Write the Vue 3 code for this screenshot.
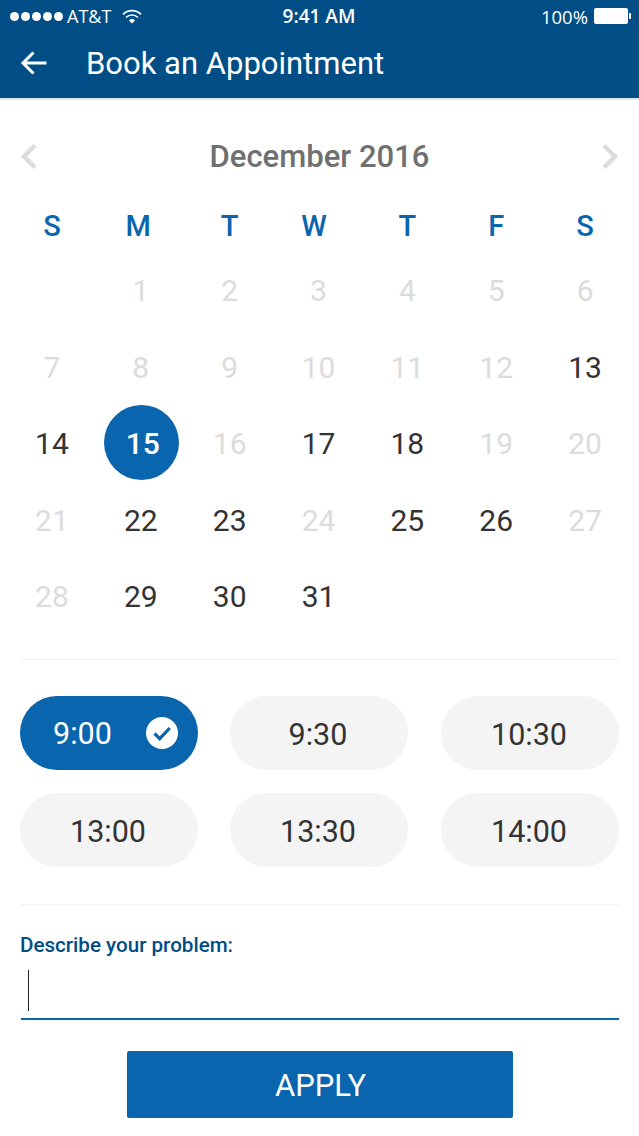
<script setup>
const weekdays = ['S', 'M', 'T', 'W', 'T', 'F', 'S']

const active = [13, 14, 15, 17, 18, 22, 23, 25, 26, 29, 30, 31]
const days = ['', ...Array.from({ length: 31 }, (_, i) => i + 1)].map((n) => ({
  n,
  on: active.includes(n),
  selected: n === 15,
}))
// december 2016 starts on a thursday in real life, the design leaves one blank
const times = ['9:00', '9:30', '10:30', '13:00', '13:30', '14:00']
</script>

<template>
  <div class="page">
    <header class="topbar">
      <div class="status">
        <div class="status-left">
          <span class="dots"><i v-for="d in 5" :key="d"></i></span>
          <span class="carrier">AT&amp;T</span>
          <svg class="wifi" width="20" height="15" viewBox="0 0 20 15">
            <path d="M1 5.4a12.8 12.8 0 0 1 18 0" fill="none" stroke="#fff" stroke-width="1.7" />
            <path d="M4 8.5a8.5 8.5 0 0 1 12 0" fill="none" stroke="#fff" stroke-width="1.7" />
            <path d="M6.9 11.4a4.4 4.4 0 0 1 6.2 0L10 14.4z" fill="#fff" />
          </svg>
        </div>
        <div class="clock">9:41 AM</div>
        <div class="status-right">
          <span>100%</span>
          <span class="battery"><i></i></span>
        </div>
      </div>
      <div class="nav">
        <svg class="back" width="28" height="26" viewBox="0 0 28 26">
          <path d="M26.5 13H3M13.5 2.5 3 13l10.500 10.500" fill="none" stroke="#fff" stroke-width="3" />
        </svg>
        <h1>Book an Appointment</h1>
      </div>
    </header>

    <section class="calendar">
      <div class="month">
        <svg width="18" height="27" viewBox="0 0 18 27">
          <path d="M15 2.500 4 13.500l11 11" fill="none" stroke="#dcdcdc" stroke-width="4.500" />
        </svg>
        <span>December 2016</span>
        <svg width="18" height="27" viewBox="0 0 18 27">
          <path d="M3 2.500l11 11-11 11" fill="none" stroke="#dcdcdc" stroke-width="4.500" />
        </svg>
      </div>
      <div class="weekdays">
        <span v-for="(w, i) in weekdays" :key="i">{{ w }}</span>
      </div>
      <div class="days">
        <div v-for="(d, i) in days" :key="i" class="day">
          <span :class="{ on: d.on, selected: d.selected }">{{ d.n }}</span>
        </div>
      </div>
    </section>

    <section class="slots">
      <button v-for="(t, i) in times" :key="t" class="slot" :class="{ picked: i === 0 }" type="button">
        <span>{{ t }}</span>
        <svg v-if="i === 0" class="tick" width="32" height="32" viewBox="0 0 32 32">
          <circle cx="16" cy="16" r="16" fill="#fff" />
          <path d="M8.500 16.500l5.200 5.200L23.800 11" fill="none" stroke="#0965ae" stroke-width="3.200" />
        </svg>
      </button>
    </section>

    <section class="problem">
      <label>Describe your problem:</label>
      <div class="field"><i class="caret"></i></div>
      <button class="apply" type="button">APPLY</button>
    </section>
  </div>
</template>

<style>
html,
body {
  margin: 0;
  background: #fff;
}
</style>

<style scoped>
.page {
  width: 639px;
  height: 1136px;
  overflow: hidden;
  font-family: Roboto, "Liberation Sans", sans-serif;
  background: #fff;
}

.topbar {
  height: 98px;
  background: #004e85;
  border-bottom: 2px solid #dfe7ec;
  color: #fff;
}

.status {
  height: 32px;
  display: grid;
  grid-template-columns: 1fr auto 1fr;
  align-items: center;
  font-size: 18px;
  font-family: "Open Sans", Roboto, sans-serif;
}

.status-left {
  display: flex;
  align-items: center;
  padding-left: 10px;
}

.dots {
  display: flex;
  gap: 2px;
}

.dots i {
  width: 9px;
  height: 9px;
  border-radius: 50%;
  background: #fff;
}

.carrier {
  margin-left: 4px;
}

.wifi {
  margin-left: 11px;
}

.clock {
  font-size: 19px;
  font-weight: 600;
  margin-right: 1px;
}

.status-right {
  display: flex;
  align-items: center;
  justify-content: flex-end;
  padding-right: 11px;
  font-size: 18.500px;
}

.battery {
  margin-left: 6px;
  width: 34px;
  height: 16px;
  background: #fff;
  border-radius: 2px;
  position: relative;
}

.battery i {
  position: absolute;
  right: -3px;
  top: 5px;
  width: 2px;
  height: 6px;
  background: #fff;
}

.nav {
  height: 61px;
  display: flex;
  align-items: center;
  padding-left: 20px;
}

.back {
  flex: none;
}

.nav h1 {
  margin: 2px 0 0 38px;
  font-size: 31px;
  font-weight: 400;
}

.calendar {
  padding-top: 39px;
  box-sizing: border-box;
  margin: 0 20px;
  border-bottom: 1px solid #f1f1f1;
  height: 560px;
}

.month {
  height: 34px;
  display: flex;
  align-items: center;
  justify-content: space-between;
  font-size: 31px;
  font-weight: 500;
  color: #707070;
}

.weekdays,
.days {
  display: grid;
  grid-template-columns: repeat(7, 88.86px);
  margin: 0 -12.500px;
}

.weekdays {
  margin-top: 33px;
  height: 40px;
  align-items: center;
  justify-items: center;
  color: #0965ae;
  font-size: 29px;
  font-weight: 500;
}

/* M and W sit a little left of their date columns in the design */
.weekdays span:nth-child(2) {
  padding-right: 5px;
}

.weekdays span:nth-child(4) {
  padding-right: 9px;
}

.days {
  margin-top: 6.500px;
  grid-auto-rows: 76.500px;
}

.day {
  display: flex;
  align-items: center;
  justify-content: center;
  font-size: 30px;
  color: #dcdcdc;
}

.day span {
  width: 75px;
  height: 75px;
  border-radius: 50%;
  display: flex;
  align-items: center;
  justify-content: center;
}

.day .on {
  color: #333;
}

.day .selected {
  box-sizing: border-box;
  margin: -2px 0 0 2px;
  padding: 2px 0 0 2px;
  background: #0965ae;
  color: #fff;
  font-weight: 500;
}

.slots {
  margin: 0 20px;
  padding: 36px 0 37px;
  display: grid;
  grid-template-columns: 210px 211px 178px;
  row-gap: 23px;
  border-bottom: 1px solid #f1f1f1;
}

.slot {
  width: 178px;
  height: 74px;
  border: 0;
  padding: 2px 2px 0 0;
  border-radius: 37px;
  background: #f4f4f4;
  color: #333;
  font: 400 30.500px Roboto, sans-serif;
  display: flex;
  align-items: center;
  justify-content: center;
}

.slot.picked {
  background: #0965ae;
  color: #fff;
  justify-content: space-between;
  padding: 0 20px 0 33px;
}

.problem {
  margin: 0 20px;
  padding-top: 27px;
}

.problem label {
  display: block;
  font-size: 20.600px;
  font-weight: 500;
  line-height: 26px;
  color: #004e85;
}

.field {
  margin-top: 12px;
  height: 48px;
  border-bottom: 2px solid #0965ae;
  margin-left: 1px;
}

.caret {
  display: block;
  width: 1px;
  height: 41px;
  margin-left: 7px;
  background: #222;
}

.apply {
  display: block;
  margin: 31px auto 0;
  width: 386px;
  height: 67px;
  border: 0;
  border-radius: 2px;
  padding: 2px 0 0 2px;
  background: #0965ae;
  color: #fff;
  font: 400 31px Roboto, sans-serif;
}
</style>
